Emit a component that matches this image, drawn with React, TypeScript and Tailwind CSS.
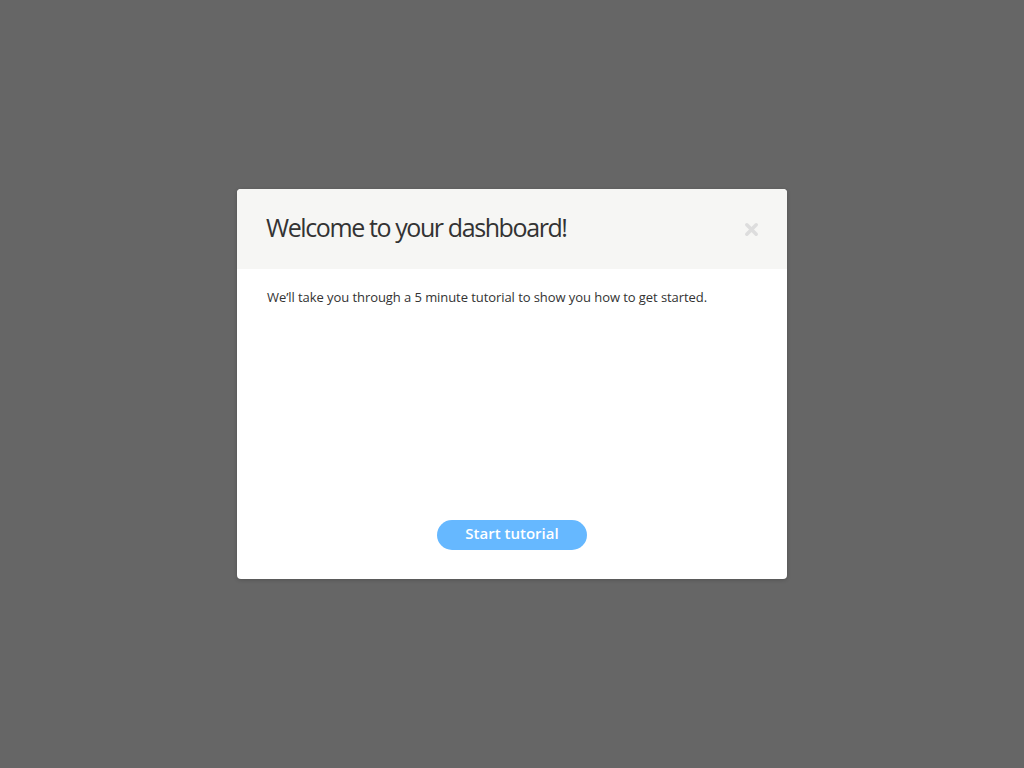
import * as React from "react";

export default function App() {
  return (
    <div
      className="flex h-[768px] w-full items-center justify-center bg-[#666666]"
      style={{ fontFamily: '"Open Sans", "Liberation Sans", sans-serif' }}
    >
      <div className="flex h-[390px] w-[550px] flex-col overflow-hidden rounded-[4px] bg-white shadow-[0_1px_4px_rgba(0,0,0,0.2)]">
        {/* Header */}
        <div className="flex h-[80px] items-center justify-between bg-[#f6f6f4] pl-[29px] pr-[28px]">
          <h1 className="-mt-[3px] text-[25px] font-normal tracking-[-1.4px] text-[#333333]">
            Welcome to your dashboard!
          </h1>
          <button
            aria-label="Close"
            className="flex h-4 w-4 items-center justify-center text-[#dddddd]"
          >
            <svg viewBox="0 0 16 16" className="h-[15px] w-[15px]" fill="none">
              <path
                d="M3 3L13 13M13 3L3 13"
                stroke="currentColor"
                strokeWidth="3.8"
                strokeLinecap="round"
              />
            </svg>
          </button>
        </div>

        {/* Body */}
        <div className="flex flex-1 flex-col px-[30px] pb-[29px] pt-[19px]">
          <p className="text-[13px] leading-[18px] tracking-[-0.07px] text-[#333333]">
            We’ll take you through a 5 minute tutorial to show you how to get started.
          </p>
          <div className="flex-1" />
          <div className="flex justify-center">
            <button className="h-[30px] w-[150px] rounded-full bg-[#66b8ff] pb-[3px] text-[15px] font-semibold text-white">
              Start tutorial
            </button>
          </div>
        </div>
      </div>
    </div>
  );
}
